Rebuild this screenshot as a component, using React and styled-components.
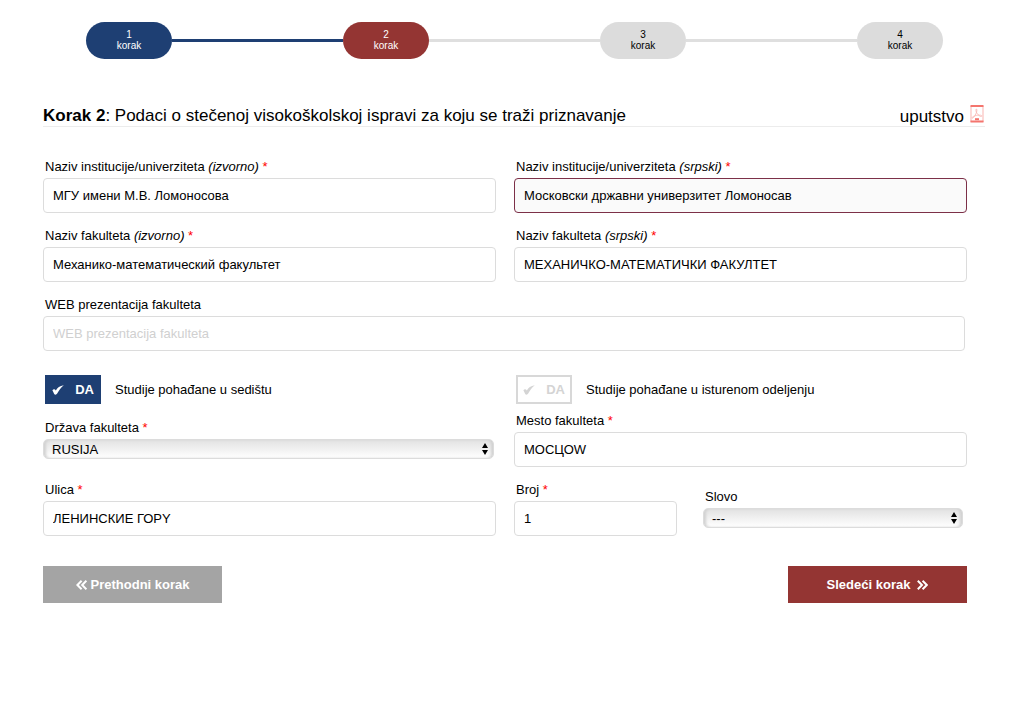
import { Fragment, useState } from "react"
import styled, { createGlobalStyle } from "styled-components"

const steps = [
  { number: 1, state: "done" },
  { number: 2, state: "active" },
  { number: 3, state: "next" },
  { number: 4, state: "next" },
]

const stepColors = { done: "#1e3f73", active: "#943533", next: "#dcdcdc" }

function TextField({ id, label, note, required, ...rest }) {
  return (
    <Field>
      <Label htmlFor={id}>
        {label}{note && <em> ({note})</em>}{required && <Star> *</Star>}
      </Label>
      <Input id={id} name={id} type="text" {...rest} />
    </Field>
  )
}

function SelectField({ id, label, required, options }) {
  return (
    <SelectBox>
      <Label htmlFor={id}>
        {label}{required && <Star> *</Star>}
      </Label>
      <SelectWrap>
        <Select id={id} name={id}>
          {options.map(option => <option key={option}>{option}</option>)}
        </Select>
        <Arrows viewBox="0 0 6 12" aria-hidden="true">
          <path d="M3 0L6 5H0ZM3 12L0 7H6Z" />
        </Arrows>
      </SelectWrap>
    </SelectBox>
  )
}

function Toggle({ text, checked, onChange }) {
  return (
    <ToggleLabel>
      <HiddenCheckbox type="checkbox" checked={checked} onChange={onChange} />
      <ToggleBox $on={checked}>
        <svg width="12" height="10" viewBox="0 0 12 10" aria-hidden="true">
          <path d="M0.4 5.2C1.4 3.9 3 4 3.8 5.4C5.6 2.6 7.6 0.8 11.8 0.2C9 2.6 7 5 5.2 8.6C4.6 9.9 2.8 10 2.2 9C1.6 7.8 1.2 6.4 0.4 5.2Z" fill="currentColor" />
        </svg>
        DA
      </ToggleBox>
      {text}
    </ToggleLabel>
  )
}

function Chevrons({ left }) {
  return (
    <svg width="11" height="10" viewBox="0 0 11 10" fill="none" stroke="currentColor" strokeWidth="2" aria-hidden="true">
      <path d={left ? "M5.6 0.7L1.4 5L5.6 9.3M10.4 0.7L6.2 5L10.4 9.3" : "M0.8 0.7L5 5L0.8 9.3M5.6 0.7L9.8 5L5.6 9.3"} />
    </svg>
  )
}

export default function App() {
  const [inSeat, setInSeat] = useState(true)
  const [inBranch, setInBranch] = useState(false)

  return (
    <Page>
      <GlobalStyle />
      <Steps>
        {steps.map((step, i) => (
          <Fragment key={step.number}>
            {i > 0 && <Connector $state={steps[i - 1].state} />}
            <Step $state={step.state}>
              <span>{step.number}</span>
              <span>korak</span>
            </Step>
          </Fragment>
        ))}
      </Steps>

      <Header>
        <Title><b>Korak 2</b>: Podaci o stečenoj visokoškolskoj ispravi za koju se traži priznavanje</Title>
        <Guide href="#uputstvo">
          uputstvo
          <svg width="14" height="18" viewBox="0 0 14 18" fill="none" aria-hidden="true">
            <path d="M1 1V17M13 1V17" stroke="#f9b5b1" />
            <path d="M0.5 1H13.5M0.5 16.5H13.5" stroke="#f4756e" strokeWidth="2" />
            <path d="M6.2 4C7.8 4 6.5 8 5 10.5C3.8 12.6 2 14 2 12.8C2.3 11.2 7 9.8 10.5 10.2C13 10.6 11.6 12.2 10 11.2C7.6 9.8 5.2 6.5 6.2 4Z" stroke="#f9b5b1" strokeWidth="0.8" />
            <path d="M5 14.2H9" stroke="#f4756e" strokeWidth="2" />
          </svg>
        </Guide>
      </Header>

      <Form onSubmit={e => e.preventDefault()}>
        <Row>
          <TextField id="institucija" label="Naziv institucije/univerziteta" note="izvorno" required defaultValue="МГУ имени М.В. Ломоносова" />
          <TextField id="institucijaSrpski" label="Naziv institucije/univerziteta" note="srpski" required $focused defaultValue="Московски државни универзитет Ломоносав" />
        </Row>
        <Row>
          <TextField id="fakultet" label="Naziv fakulteta" note="izvorno" required defaultValue="Механико-математический факультет" />
          <TextField id="fakultetSrpski" label="Naziv fakulteta" note="srpski" required defaultValue="МЕХАНИЧКО-МАТЕМАТИЧКИ ФАКУЛТЕТ" />
        </Row>
        <WideRow>
          <TextField id="web" label="WEB prezentacija fakulteta" placeholder="WEB prezentacija fakulteta" />
        </WideRow>
        <ToggleRow>
          <Toggle text="Studije pohađane u sedištu" checked={inSeat} onChange={e => setInSeat(e.target.checked)} />
          <Toggle text="Studije pohađane u isturenom odeljenju" checked={inBranch} onChange={e => setInBranch(e.target.checked)} />
        </ToggleRow>
        <Row>
          <SelectField id="drzava" label="Država fakulteta" required options={["RUSIJA", "SRBIJA"]} />
          <TextField id="mesto" label="Mesto fakulteta" required defaultValue="МОСЦОW" />
        </Row>
        <Row>
          <TextField id="ulica" label="Ulica" required defaultValue="ЛЕНИНСКИЕ ГОРY" />
          <NumberRow>
            <TextField id="broj" label="Broj" required defaultValue="1" />
            <SelectField id="slovo" label="Slovo" options={["---", "A", "B", "C"]} />
          </NumberRow>
        </Row>
        <Buttons>
          <Button type="button" $color="#a4a4a4" $gap="4px"><Chevrons left />Prethodni korak</Button>
          <Button type="submit" $color="#943533" $gap="7px">Sledeći korak<Chevrons /></Button>
        </Buttons>
      </Form>
    </Page>
  )
}

const GlobalStyle = createGlobalStyle`
  * {
    box-sizing: border-box;
  }
  body {
    margin: 0;
    background: #fff;
    color: #000;
    font-family: "Liberation Sans", Arial, sans-serif;
    font-size: 13px;
  }
  input, select, button {
    font: inherit;
    color: inherit;
  }
`
const Page = styled.main`
  padding: 22px 39px 40px 43px;
`
const Steps = styled.div`
  display: flex;
  align-items: center;
  padding: 0 42px 0 43px;
`
const Step = styled.div`
  display: flex;
  flex-direction: column;
  align-items: center;
  justify-content: center;
  width: 86px;
  height: 37px;
  padding-bottom: 1px;
  border-radius: 19px;
  background: ${({ $state }) => stepColors[$state]};
  color: ${({ $state }) => $state === "next" ? "#000" : "#fff"};
  font-size: 10px;
  line-height: 11px;
`
const Connector = styled.div`
  flex: 1;
  height: 3px;
  background: ${({ $state }) => $state === "done" ? "#1e3f73" : "#dfdfdf"};
`
const Header = styled.header`
  display: flex;
  justify-content: space-between;
  align-items: flex-end;
  height: 24px;
  margin-top: 44px;
  border-bottom: 1px solid #ececec;
`
const Title = styled.h1`
  margin: 0;
  font-size: 17px;
  font-weight: 400;
  line-height: 20px;
  white-space: nowrap;
`
const Guide = styled.a`
  display: flex;
  align-items: flex-end;
  gap: 6px;
  padding-right: 1px;
  color: #000;
  font-size: 17px;
  line-height: 18px;
  text-decoration: none;
  svg {
    margin-bottom: 3px;
  }
`
const Form = styled.form`
  display: flex;
  flex-direction: column;
  gap: 13px;
  padding: 30px 18px 0 0;
`
const Row = styled.div`
  display: grid;
  grid-template-columns: 1fr 1fr;
  gap: 18px;
  align-items: center;
`
const WideRow = styled.div`
  padding-right: 2px;
`
const ToggleRow = styled(Row)`
  padding-top: 11px;
  margin-bottom: -6px;
`
const NumberRow = styled.div`
  display: grid;
  grid-template-columns: 163fr 262fr;
  gap: 26px;
  align-items: center;
  padding-right: 2px;
`
const Field = styled.div`
  display: flex;
  flex-direction: column;
  gap: 1px;
  min-width: 0;
`
const SelectBox = styled(Field)`
  padding: 0 2px 1px 0;
`
const Label = styled.label`
  padding-left: 2px;
  line-height: 20px;
`
const Star = styled.span`
  color: #f00;
`
const Input = styled.input`
  width: 100%;
  height: 35px;
  padding: 0 9px;
  border: 1px solid ${({ $focused }) => $focused ? "#7c3048" : "#dcdcdc"};
  border-radius: 4px;
  background: ${({ $focused }) => $focused ? "#fafafa" : "#fff"};
  outline: none;
  &::placeholder {
    color: #d0d0d0;
    opacity: 1;
  }
`
const SelectWrap = styled.div`
  position: relative;
`
const Select = styled.select`
  display: block;
  appearance: none;
  width: 100%;
  height: 20px;
  padding: 0 20px 0 8px;
  border: 1px solid #dcdcdc;
  border-radius: 5px;
  background: linear-gradient(#e2e2e2, #fff);
  box-shadow: inset 3px 0 3px -1px #d0d0d0, inset -3px 0 3px -1px #d0d0d0;
`
const Arrows = styled.svg`
  position: absolute;
  top: 4px;
  right: 6px;
  width: 6px;
  height: 12px;
  pointer-events: none;
`
const ToggleLabel = styled.label`
  display: flex;
  align-items: center;
  gap: 14px;
  padding-left: 2px;
`
const HiddenCheckbox = styled.input`
  position: absolute;
  opacity: 0;
  pointer-events: none;
`
const ToggleBox = styled.span`
  display: flex;
  align-items: center;
  justify-content: space-between;
  width: 56px;
  height: 29px;
  padding: 0 5px;
  border: 2px solid ${({ $on }) => $on ? "#1e3f73" : "#d8d8d8"};
  background: ${({ $on }) => $on ? "#1e3f73" : "#fff"};
  color: ${({ $on }) => $on ? "#fff" : "#d4d4d4"};
  font-weight: 700;
`
const Buttons = styled.div`
  display: flex;
  justify-content: space-between;
  padding-top: 17px;
`
const Button = styled.button`
  display: flex;
  align-items: center;
  justify-content: center;
  gap: ${({ $gap }) => $gap};
  width: 179px;
  height: 37px;
  border: none;
  background: ${({ $color }) => $color};
  color: #fff;
  font-weight: 700;
`
